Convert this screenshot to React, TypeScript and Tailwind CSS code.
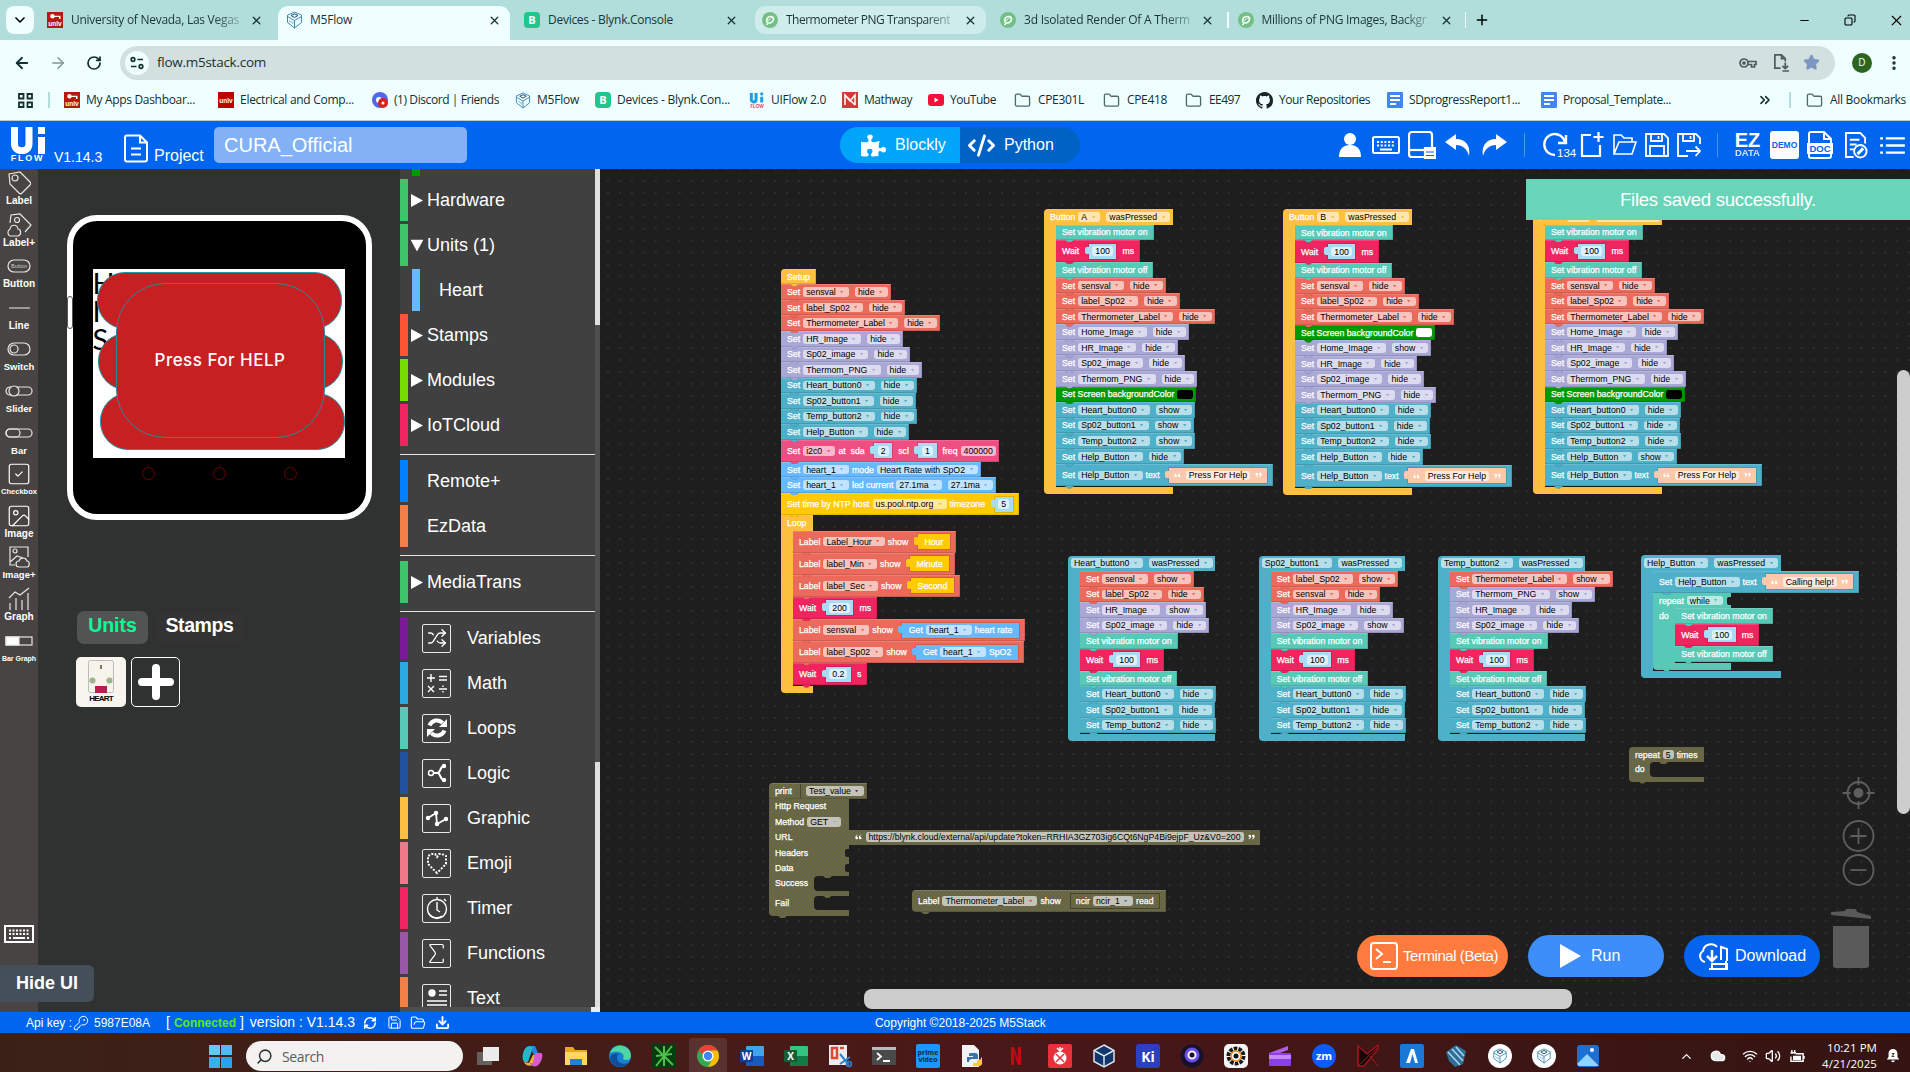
import React, { useLayoutEffect, useRef } from "react";
import {
  ArrowLeft, ArrowRight, RotateCw, ChevronDown, ChevronUp, X, Plus, Minus, Star, KeyRound, EllipsisVertical, Folder,
  ChevronsRight, CodeXml, FolderOpen, Save, Tag, Download, Search, Wifi, Volume2,
  Shuffle, RefreshCw, Sigma, Image as ImageIcon, Cloud, Copy, SquareCheck,
} from "lucide-react";
import { FaPuzzlePiece } from "react-icons/fa";

/* Text run whose tracking is adjusted so that it fills a given width. */
function Fit({ w, children, className = "" }: { w: number; children: string; className?: string }) {
  const ref = useRef<HTMLSpanElement>(null);
  useLayoutEffect(() => {
    const el = ref.current;
    if (!el) return;
    el.style.letterSpacing = "0px";
    const natural = el.getBoundingClientRect().width;
    el.style.letterSpacing = `${(w - natural) / children.length}px`;
  }, [w, children]);
  return (
    <span ref={ref} className={`inline-block shrink-0 whitespace-pre ${className}`}>
      {children}
    </span>
  );
}

/* ---------- favicons ---------- */
const Unlv = ({ keyed = true }: { keyed?: boolean }) => (
  <svg viewBox="0 0 16 16" className="h-4 w-4 shrink-0">
    <rect width="16" height="16" fill={keyed ? "#b41a10" : "#c00000"} />
    {keyed && <path d="M5.5 2a2.3 2.3 0 1 0 0 4.6A2.3 2.3 0 0 0 7.7 5H12v2h1.500V3.700H7.700A2.300 2.300 0 0 0 5.500 2z" fill="#fff" />}
    <text x="8" y={keyed ? 14 : 11} fontSize="6.500" fontWeight="700" textAnchor="middle" fill="#fff" fontFamily="Liberation Sans">unlv</text>
  </svg>
);
const M5 = ({ className = "h-[18px] w-[17px]" }: { className?: string }) => (
  <svg viewBox="0 0 17 18" className={`shrink-0 ${className}`} fill="none" stroke="#3e88b8" strokeWidth="1">
    <path d="M8.500 1 15.500 4.200v7.300L8.500 17 1.500 11.500V4.200z M1.500 5.500l7 4 7-4M8.500 9.500V17" />
    <path d="M5 4.500l3.500-1.700L12 4.500 8.500 6.500z" stroke="#1d4460" />
    <path d="M3 9.500l4 3v-2" stroke="#8dbcd8" />
  </svg>
);
const Blynk = () => (
  <div className="flex h-4 w-4 shrink-0 items-center justify-center rounded bg-[#23c48e] text-[11px] font-bold text-white">B</div>
);
const Png = () => (
  <svg viewBox="0 0 16 16" className="h-4 w-4 shrink-0">
    <circle cx="8" cy="8" r="8" fill="#74bf86" />
    <path d="M5 10.500c-1-4 1-6 3.500-6 2 0 3 1 3 2.500 0 2.500-2.500 4-5.500 4l-1.500 2" fill="none" stroke="#f2fff5" strokeWidth="1.700" />
    <path d="M6.500 9c.5-1.500 1.500-2.500 3-3" stroke="#f2fff5" fill="none" />
  </svg>
);
const Doc = () => (
  <svg viewBox="0 0 16 16" className="h-4 w-4 shrink-0">
    <rect width="16" height="16" rx="1" fill="#4484f1" />
    <path d="M3 4h10M3 8h10M3 12h6" stroke="#fff" strokeWidth="1.800" />
  </svg>
);

/* ---------- browser chrome ---------- */
function Tab({ icon, label, w, width, state = "", gap = 8, fade = "" }: { icon: React.ReactNode; label: string; w: number; width: string; state?: string; gap?: number; fade?: string }) {
  return (
    <div className={`flex shrink-0 items-center ${width} ${state}`}>
      {icon}
      <div className="shrink-0" style={{ width: gap }} />
      <Fit w={w} className={`text-[12px] text-[#1c3434] ${fade}`}>{label}</Fit>
      <X className="mr-[9px] ml-auto h-[13px] w-[13px] shrink-0 text-[#173231]" strokeWidth={2.4} />
    </div>
  );
}

const FADE = "[mask-image:linear-gradient(to_right,black_85%,rgba(0,0,0,0.3))]";

function TabStrip() {
  return (
    <div className="flex h-10 bg-[#b1dedb]">
      <div className="mt-1.5 ml-1.5 flex h-7 w-7 items-center justify-center rounded-lg bg-[#efffff]">
        <ChevronDown className="h-4 w-4" strokeWidth={2.5} />
      </div>
      <div className="flex h-10">
        <Tab icon={<Unlv />} label="University of Nevada, Las Vegas" w={168} fade={FADE} width="h-10 w-[233px] ml-[11px] pl-[2px] pr-[6px]" />
        <Tab icon={<M5 />} label="M5Flow" w={42} gap={7} width="w-[232px] pl-2" state="mt-1.5 h-[34px] rounded-t-[10px] bg-[#efffff] pb-[6px]" />
        <Tab icon={<Blynk />} label="Devices - Blynk.Console" w={125} width="h-10 w-[245px] pl-[14px] pr-[8px]" />
        <Tab icon={<Png />} label="Thermometer PNG Transparent" w={164} fade={FADE} width="w-[231px] pl-[7px]" state="mt-1.5 h-7 rounded-[10px] bg-[#cdecea]" />
        <Tab icon={<Png />} label="3d Isolated Render Of A Therm" w={166} fade={FADE} width="h-10 w-[241px] pl-[14px] pr-[4px]" />
        <div className="mt-3 h-4 w-[1.500px] bg-[#efffff]" />
        <Tab icon={<Png />} label="Millions of PNG Images, Backgr" w={165} fade={FADE} width="h-10 w-[236px] pl-[9px] pr-[3px]" />
        <div className="mt-3 h-4 w-[1.500px] bg-[#efffff]" />
      </div>
      <Plus className="mt-[12px] ml-[8px] h-4 w-4" strokeWidth={2.2} />
      <div className="ml-auto flex items-center pr-[5px]">
        <Minus className="h-[13px] w-[13px]" strokeWidth={1.800} />
        <Copy className="ml-[33px] h-[12px] w-[12px] -scale-x-100" strokeWidth={2.200} />
        <X className="ml-[32px] h-[17px] w-[17px]" strokeWidth={1.600} />
      </div>
    </div>
  );
}

function AddressBar() {
  return (
    <div className="flex h-[45px] items-center bg-[#efffff] pr-[7px] pl-[13px] text-[#12302f]">
      <ArrowLeft className="h-[18px] w-[18px]" strokeWidth={2.400} />
      <ArrowRight className="ml-[18px] h-[18px] w-[18px] opacity-50" />
      <RotateCw className="ml-[19px] h-4 w-4" strokeWidth={2.600} />
      <div className="ml-[18px] flex h-[34px] w-[1715px] items-center rounded-full bg-[#d3e0e0] px-[5px]">
        <div className="flex h-6 w-6 items-center justify-center rounded-full bg-[#efffff]">
          <svg viewBox="0 0 16 16" className="h-4 w-4" fill="none" stroke="#12302f" strokeWidth="1.700">
            <circle cx="4" cy="4.500" r="1.800" /><path d="M8.500 4.500H14M2 11.500h5.500" /><circle cx="12" cy="11.500" r="1.800" />
          </svg>
        </div>
        <Fit w={109} className="ml-2 text-[13.500px] text-[#1e2f2f]">flow.m5stack.com</Fit>
        <svg viewBox="0 0 18 12" className="ml-auto h-[12px] w-[18px]" fill="none" stroke="#4c5c5c" strokeWidth="1.700">
          <circle cx="5" cy="6" r="4" /><circle cx="5" cy="6" r="1" fill="#4c5c5c" /><path d="M9 4.500h8v3h-1.500V10h-3V7.500H9" />
        </svg>
        <svg viewBox="0 0 18 20" className="ml-4 h-[19px] w-[17px]" fill="none" stroke="#4c5c5c" strokeWidth="1.800">
          <path d="M8 16H2V2h7l4 4v3M9 2v4h4M13 10v6M10 13.500l3 3 3-3M10 19h7" />
        </svg>
        <Star className="mr-[10px] ml-[13px] h-[17px] w-[17px] fill-[#7d97c3] text-[#7d97c3]" />
      </div>
      <div className="ml-[17px] flex h-5 w-5 items-center justify-center rounded-full bg-[#2b651f] text-[10px] text-white">D</div>
      <EllipsisVertical className="ml-auto h-[18px] w-[18px]" strokeWidth={2.600} />
    </div>
  );
}

function Mark({ icon, text, w, ml, iw = 22 }: { icon: React.ReactNode; text: string; w: number; ml: number; iw?: number }) {
  return (
    <div className="flex shrink-0 items-center" style={{ marginLeft: ml }}>
      <div className="flex items-center" style={{ width: iw }}>{icon}</div>
      <Fit w={w}>{text}</Fit>
    </div>
  );
}

function Bookmarks() {
  const folder = <Folder className="h-[17px] w-[17px] text-[#4f6a69]" strokeWidth={1.900} />;
  return (
    <div className="flex h-[36px] items-center border-b border-[#b9cccb] bg-[#efffff] pb-[5px] text-[12px] text-[#132f2e]">
      <svg viewBox="0 0 15 15" className="ml-[18px] h-[15px] w-[15px]" fill="none" stroke="#12302f" strokeWidth="1.800">
        <path d="M1 1h4.500v4.500H1zM9.500 1H14v4.500H9.500zM1 9.500h4.500V14H1zM9.500 9.500H14V14H9.500z" />
      </svg>
      <div className="ml-[15px] h-4 w-[2px] bg-[#b1dedb]" />
      <Mark ml={14} icon={<Unlv />} text="My Apps Dashboar..." w={109} />
      <Mark ml={23} icon={<Unlv keyed={false} />} text="Electrical and Comp..." w={114} />
      <Mark ml={18} icon={<svg viewBox="0 0 16 16" className="h-4 w-4"><circle cx="8" cy="8" r="8" fill="#5566e8" /><circle cx="7" cy="8" r="3" fill="#fff" /><circle cx="11" cy="11" r="5" fill="#d8231f" /><circle cx="11" cy="11" r="1.500" fill="#fff" /></svg>} text="(1) Discord | Friends" w={105} />
      <Mark ml={16} icon={<M5 className="h-[17px] w-4" />} text="M5Flow" w={42} />
      <Mark ml={16} icon={<Blynk />} text="Devices - Blynk.Con..." w={113} />
      <Mark ml={19} icon={<svg viewBox="0 0 16 18" className="h-[17px] w-4"><path d="M2 1v7a2.500 2.500 0 0 0 5 0V1M13 5v6" stroke="#1c9fe0" strokeWidth="3.200" fill="none" /><circle cx="13" cy="2" r="1.700" fill="#1c9fe0" /><text x="8" y="17" fontSize="5" fontWeight="700" fill="#e04a6a" textAnchor="middle">FLOW</text></svg>} text="UIFlow 2.0" w={55} />
      <Mark ml={16} icon={<svg viewBox="0 0 16 16" className="h-4 w-4"><rect width="16" height="16" fill="#cf3b36" /><path d="M3 13V3l5 6 5-6v10M3 3l10 10" stroke="#fff" strokeWidth="1.500" fill="none" /></svg>} text="Mathway" w={48} />
      <Mark ml={16} icon={<svg viewBox="0 0 16 16" className="h-4 w-4"><rect y="2" width="16" height="12" rx="3" fill="#f5103a" /><path d="M6.500 5.500v5l4-2.500z" fill="#fff" /></svg>} text="YouTube" w={46} />
      <Mark ml={18} iw={24} icon={folder} text="CPE301L" w={46} />
      <Mark ml={19} iw={24} icon={folder} text="CPE418" w={40} />
      <Mark ml={18} iw={24} icon={folder} text="EE497" w={31} />
      <Mark ml={16} iw={23} icon={<svg viewBox="0 0 16 16" className="h-[17px] w-[17px]"><path fill="#1b2327" d="M8 0C3.580 0 0 3.580 0 8c0 3.540 2.290 6.530 5.470 7.590.4.070.55-.17.55-.38 0-.19-.01-.82-.01-1.490-2.010.37-2.530-.49-2.690-.94-.09-.23-.48-.94-.82-1.130-.28-.15-.68-.52-.01-.53.63-.01 1.080.58 1.230.82.72 1.210 1.870.87 2.330.66.070-.52.28-.87.51-1.070-1.780-.2-3.640-.89-3.640-3.950 0-.87.31-1.590.82-2.150-.08-.2-.36-1.020.08-2.120 0 0 .67-.21 2.200.82.64-.18 1.320-.27 2-.27s1.360.09 2 .27c1.530-1.040 2.200-.82 2.200-.82.44 1.100.16 1.920.08 2.120.51.56.82 1.270.82 2.150 0 3.070-1.870 3.750-3.650 3.950.29.25.54.73.54 1.480 0 1.070-.01 1.930-.01 2.200 0 .21.15.46.55.38A8.010 8.010 0 0 0 16 8c0-4.420-3.580-8-8-8" /></svg>} text="Your Repositories" w={91} />
      <Mark ml={17} icon={<Doc />} text="SDprogressReport1..." w={111} />
      <Mark ml={21} icon={<Doc />} text="Proposal_Template..." w={108} />
      <ChevronsRight className="mr-[16px] ml-auto h-4 w-4" strokeWidth={2.400} />
      <div className="h-4 w-[2px] bg-[#b1dedb]" />
      <div className="mr-[4px]"><Mark ml={15} iw={24} icon={folder} text="All Bookmarks" w={76} /></div>
    </div>
  );
}

/* ---------- UIFlow header ---------- */
const Sheet = ({ children, className }: { children?: React.ReactNode; className: string }) => (
  <svg viewBox="0 0 24 28" className={`shrink-0 ${className}`} fill="none" stroke="#fff" strokeWidth="2">
    <path d="M16 1H3a2 2 0 0 0-2 2v22a2 2 0 0 0 2 2h18a2 2 0 0 0 2-2V8zM16 1v7h7" />
    {children}
  </svg>
);

function Header() {
  return (
    <div className="flex h-12 items-center bg-[#0066ef] text-white">
      <div className="ml-[10px] flex w-[35px] flex-col items-center">
        <svg viewBox="0 0 34 27" className="h-[27px] w-[34px]" fill="none" stroke="#fff" strokeWidth="7">
          <path d="M3.500 0v17c0 9 14.500 9 14.500 0V0M30.500 10v17" /><path d="M27 3.500h7" />
        </svg>
        <span className="text-[9px] leading-[9px] font-bold tracking-[1.700px]">FLOW</span>
      </div>
      <span className="ml-[9px] w-[49px] pt-6 text-[14px] leading-none">V1.14.3</span>
      <Sheet className="ml-[21px] mt-[6px] h-[29px] w-[24px]"><path d="M7 14h10M7 20h10" /></Sheet>
      <span className="ml-[6px] w-[51px] pt-[22px] text-[16px] leading-[18px]">Project</span>
      <div className="ml-[9px] flex h-9 w-[253px] items-center rounded-[5px] bg-[#82b1f6] pl-[10px] text-[20px]">CURA_Official</div>
      <div className="ml-[373px] flex h-9 overflow-hidden rounded-full text-[16px]">
        <div className="flex w-[120px] items-center bg-[#00a4f8] pl-[21px]">
          <FaPuzzlePiece className="mr-[9px] h-[25px] w-[25px]" />Blockly
        </div>
        <div className="flex w-[120px] items-center bg-[#0062c4] pl-[7px]">
          <CodeXml className="mr-[8px] h-[29px] w-[29px]" strokeWidth={2.400} />Python
        </div>
      </div>
      <svg viewBox="0 0 22 24" className="ml-[259px] h-6 w-[22px]" fill="#fff"><circle cx="11" cy="6" r="6" /><path d="M0 24c0-8 4-12 11-12s11 4 11 12z" /></svg>
      <svg viewBox="0 0 28 18" className="ml-[11px] h-[18px] w-[28px]" fill="none" stroke="#fff" strokeWidth="2">
        <rect x="1" y="1" width="26" height="16" rx="1.500" /><path d="M5 6h18M5 9.500h18" strokeDasharray="2 1.700" /><path d="M8 13.500h12" />
      </svg>
      <svg viewBox="0 0 28 28" className="ml-2 h-7 w-[28px]" fill="none" stroke="#fff" strokeWidth="2.200">
        <path d="M16 26H4a3 3 0 0 1-3-3V4a3 3 0 0 1 3-3h17a3 3 0 0 1 3 3v12" /><path d="M1 19h16" /><path d="M17 17h10v11H17z" fill="#fff" /><path d="M18 21h8M18 24.500h8" stroke="#0066ef" strokeWidth="1" />
      </svg>
      <svg viewBox="0 0 26 24" className="ml-[9px] h-6 w-[26px]" fill="#fff"><path d="M11 1 0 9l11 8v-5c7 0 11 4 13 11C26 12 20 6 11 6z" /></svg>
      <svg viewBox="0 0 26 24" className="ml-[10px] h-6 w-[26px] -scale-x-100" fill="#fff"><path d="M11 1 0 9l11 8v-5c7 0 11 4 13 11C26 12 20 6 11 6z" /></svg>
      <div className="ml-[17px] h-6 w-px bg-[#4d94f5]" />
      <svg viewBox="0 0 34 28" className="ml-[18px] h-7 w-[34px]" fill="none" stroke="#fff" strokeWidth="2.400">
        <path d="M12 24A10.500 10.500 0 1 1 22 11" /><path d="M15 12h8V4" />
        <text x="14" y="26" fill="#fff" stroke="none" fontSize="11.500">134</text>
      </svg>
      <svg viewBox="0 0 24 26" className="ml-[3px] h-[26px] w-6" fill="none" stroke="#fff" strokeWidth="2.200"><path d="M11 3H2v21h18V13M18.500 0v10M13.500 5h10" /></svg>
      <svg viewBox="0 0 24 22" className="ml-[9px] h-[22px] w-6" fill="none" stroke="#fff" strokeWidth="1.600"><path d="M1 20V1h7l3 3h8v4M1 20 6 8h17l-4 12z" /></svg>
      <svg viewBox="0 0 24 24" className="ml-[8px] h-6 w-6" fill="none" stroke="#fff" strokeWidth="1.800"><path d="M1 1h18l4 4v18H1zM6 1v7h11V1M5 23V13h14v10M13.500 3v3" /></svg>
      <svg viewBox="0 0 24 24" className="ml-[8px] h-6 w-6" fill="none" stroke="#fff" strokeWidth="1.800"><path d="M11 23H1V1h18l4 4v6M6 1v7h11V1M13.500 3v3M9 18h14M18.500 13.500 23 18l-4.500 5" /></svg>
      <div className="ml-[16px] h-6 w-px bg-[#4d94f5]" />
      <div className="ml-[16px] w-[27px] text-center">
        <div className="text-[20px] leading-[16px] font-bold">EZ</div>
        <div className="text-[9.500px] leading-[10px] font-bold opacity-80">DATA</div>
      </div>
      <div className="ml-[9px] flex h-7 w-[29px] items-center justify-center rounded-[3px] bg-white text-[8.500px] font-bold text-[#0066ef]">DEMO</div>
      <Sheet className="ml-[7px] h-7 w-[28px]"><rect x="-1" y="12" width="26" height="11" fill="#fff" stroke="none" /><text x="12" y="21" fontSize="9.500" fontWeight="700" fill="#0066ef" stroke="none" textAnchor="middle">DOC</text></Sheet>
      <svg viewBox="0 0 24 28" className="ml-[11px] h-[27px] w-[23px]" fill="none" stroke="#fff" strokeWidth="2"><path d="M9 26H1V1h15l5 5v6M5 8h10M5 13h7M5 18h4" /><circle cx="16" cy="20" r="6.500" /><path d="m13 23 6-6" strokeWidth="3" /></svg>
      <svg viewBox="0 0 26 20" className="ml-[12px] h-[19px] w-[25px]" fill="none" stroke="#fff" strokeWidth="2.600"><path d="M0 2.500h3M6 2.500h20M0 10h3M6 10h20M0 17.500h3M6 17.500h20" /></svg>
    </div>
  );
}

/* ---------- widget rail ---------- */
function Rail() {
  const s = { fill: "none", stroke: "#e6e6e6", strokeWidth: 1.2 } as const;
  const items: [string, React.ReactNode, string][] = [
    ["Label", <svg viewBox="0 0 24 24" className="h-6 w-6" {...s}><path d="M2 3 13 1l10 10c1 1 1 2 0 3l-8 8c-1 1-2 1-3 0L3 13z" /><circle cx="8" cy="7" r="3" /></svg>, "text-[10px]"],
    ["Label+", <svg viewBox="0 0 26 24" className="h-6 w-[26px]" {...s}><path d="M4 10 5 2l9-1 11 11-6 7" /><circle cx="11" cy="7" r="2.500" /><path d="M4 23a4 4 0 0 1 0-7c1-5 7-5 8 0 3 0 4 6 0 7z" /></svg>, "text-[10px]"],
    ["Button", <svg viewBox="0 0 24 14" className="h-[14px] w-6" {...s}><rect x="1" y="1" width="22" height="12" rx="6" /><text x="12" y="9" fontSize="5.500" fill="#ccc" stroke="none" textAnchor="middle">Button</text></svg>, "text-[10px]"],
    ["Line", <div className="h-[1.500px] w-[21px] bg-[#999]" />, "text-[10px]"],
    ["Switch", <svg viewBox="0 0 24 14" className="h-[14px] w-6" {...s}><rect x="1" y="1" width="22" height="12" rx="6" /><circle cx="7" cy="7" r="4" /></svg>, "text-[9.500px]"],
    ["Slider", <svg viewBox="0 0 28 14" className="h-[14px] w-7" {...s}><rect x="1" y="3" width="26" height="8" rx="4" /><circle cx="9" cy="7" r="5" fill="#484443" /></svg>, "text-[9.500px]"],
    ["Bar", <svg viewBox="0 0 28 14" className="h-[14px] w-7" {...s}><rect x="1" y="3" width="26" height="8" rx="4" /><rect x="1" y="3" width="14" height="8" rx="4" /></svg>, "text-[9.500px]"],
    ["Checkbox", <SquareCheck className="h-[26px] w-[26px]" strokeWidth={1.1} />, "text-[7.500px]"],
    ["Image", <ImageIcon className="h-[26px] w-[26px]" strokeWidth={1.1} />, "text-[10px]"],
    ["Image+", <svg viewBox="0 0 24 24" className="h-6 w-6" {...s}><path d="M8 20H3V2h18v10M3 17l7-6 6 2" /><circle cx="8" cy="6" r="2" /><path d="M12 22a3 3 0 0 1 0-6c1-4 7-4 8 0 3 0 3 6 0 6z" /></svg>, "text-[9.500px]"],
    ["Graph", <svg viewBox="0 0 24 24" className="h-6 w-6" {...s}><path d="m2 11 6-6 5 3 9-7M3 23v-7M9 23V11M15 23V13M21 23V6" /></svg>, "text-[10px]"],
    ["Bar Graph", <svg viewBox="0 0 28 10" className="h-[10px] w-7" {...s}><rect x="1" y="1" width="26" height="8" /><rect x="1" y="1" width="13" height="8" fill="#fff" /></svg>, "text-[7px]"],
  ];
  return (
    <div className="flex w-[38px] shrink-0 flex-col bg-[#484443] text-white">
      {items.map(([label, icon, size]) => (
        <div key={label} className="flex h-[41.600px] flex-col items-center">
          <div className="flex h-[26px] items-center pt-[2px]">{icon}</div>
          <span className={`leading-[11px] font-bold whitespace-nowrap ${size}`}>{label}</span>
        </div>
      ))}
      <svg viewBox="0 0 30 18" className="mt-[257px] ml-1 h-[18px] w-[30px]" fill="none" stroke="#fff" strokeWidth="2">
        <rect x="1" y="1" width="28" height="16" /><path d="M5 5.500h20M5 9h20" strokeDasharray="2 1.500" /><path d="M5 13h2M9 13h12M23 13h2" />
      </svg>
    </div>
  );
}

/* ---------- device preview ---------- */
function Preview() {
  const pill = "absolute h-[57px] w-[245px] rounded-[28px] border border-[#1f94a3] bg-[#c62022]";
  return (
    <div className="relative flex w-[362px] shrink-0 flex-col bg-[#303231]">
      <div className="relative mt-[46px] ml-[28.500px] flex h-[305px] w-[305px] flex-col rounded-[30px] border-[6.500px] border-white bg-black">
        <div className="absolute top-[75px] -left-[6px] h-[33px] w-[6px] rounded-[3px] border border-[#555] bg-white" />
        <div className="relative mt-[48px] ml-[20px] h-[189px] w-[252px] overflow-hidden bg-white">
          <div className="absolute top-0 left-0 text-[29px] leading-[28px] text-black" style={{ fontFamily: "Lato, sans-serif" }}>
            <div>H</div><div>I</div><div>S</div>
          </div>
          <div className={`${pill} top-[3px] left-[4px]`} />
          <div className={`${pill} top-[64px] left-[5px]`} />
          <div className={`${pill} top-[124px] left-[7px]`} />
          <div className="absolute top-[14px] left-[23px] flex h-[155px] w-[209px] items-center justify-center rounded-[49px] border border-[#2c8894] bg-[#c62022] font-medium text-white" style={{ fontFamily: "Inter, 'Noto Sans', sans-serif" }}>
            <Fit w={131} className="text-[17px]">Press For HELP</Fit>
          </div>
        </div>
        <div className="mt-[9px] flex justify-center gap-[58px]">
          <div className="h-[13px] w-[13px] rounded-full border border-[#710000]" />
          <div className="h-[13px] w-[13px] rounded-full border border-[#710000]" />
          <div className="h-[13px] w-[13px] rounded-full border border-[#710000]" />
        </div>
      </div>
      <div className="mt-[91px] ml-[39px] flex text-[19.500px] font-bold">
        <div className="flex h-[33px] w-[71px] items-center justify-center rounded-[7px] bg-[#525453] pb-1 text-[#0dfb95]">Units</div>
        <div className="ml-[8px] flex h-[33px] w-[87px] items-center justify-center rounded-[7px] bg-[#333333] pb-1 text-white"><Fit w={68}>Stamps</Fit></div>
      </div>
      <div className="mt-[13px] ml-[38px] flex gap-[5px]">
        <div className="flex h-[50px] w-[50px] flex-col items-center rounded-[5px] bg-[#f8f4ee] pt-[3px]">
          <svg viewBox="0 0 26 34" className="h-[34px] w-[26px]"><rect x=".5" y=".5" width="25" height="32" rx="2" fill="#f6f3ea" stroke="#bbb" /><path d="M13 5v4" stroke="#643" strokeWidth="1.500" /><circle cx="4.500" cy="20.500" r="3" fill="#9fb28c" /><circle cx="21.500" cy="20.500" r="3" fill="#9fb28c" /><path d="M7 26h12v7H7z" fill="#b81f4f" /></svg>
          <span className="text-[8px] leading-[9px] font-bold tracking-[-0.800px] text-black">HEART</span>
        </div>
        <div className="flex h-[50px] w-[49px] items-center justify-center rounded-[5px] border-[1.500px] border-white">
          <svg viewBox="0 0 36 36" className="h-9 w-9"><path d="M18 4v28M4 18h28" stroke="#fff" strokeWidth="8" strokeLinecap="round" /></svg>
        </div>
      </div>
    </div>
  );
}

/* ---------- toolbox ---------- */
const glyph = { fill: "none", stroke: "#fff", strokeWidth: 1.4 } as const;
const toolIcons: Record<string, React.ReactNode> = {
  Variables: <Shuffle className="h-[20px] w-[20px]" strokeWidth={1.6} />,
  Math: <svg viewBox="0 0 24 24" className="h-6 w-6" {...glyph}><path d="M2 7h8M6 3v8M14 5.500h8M14 9h8M3 15l6 6M9 15l-6 6M14 18h8M18 14.500v1.500M18 20v1.500" /></svg>,
  Loops: <svg viewBox="0 0 24 24" className="h-6 w-6" fill="none" stroke="#fff" strokeWidth="4"><path d="M4.500 9.500C7 3.500 14 3 17.500 7M19.500 14.500C17 20.500 10 21 6.500 17" /><path d="M22 3v8h-8zM2 21v-8h8z" fill="#fff" stroke="none" /></svg>,
  Logic: <svg viewBox="0 0 24 24" className="h-6 w-6" {...glyph}><circle cx="6" cy="12" r="2.500" /><path d="M8.500 12h4c3 0 3-7 6-7M12.500 12c3 0 3 7 6 7" strokeWidth="2" /><circle cx="19" cy="5" r="1.500" fill="#fff" /><circle cx="19" cy="19" r="1.500" fill="#fff" /></svg>,
  Graphic: <svg viewBox="0 0 24 24" className="h-6 w-6" {...glyph} strokeWidth={1.800}><path d="m3 12 8-5 1 11 9-5" /><circle cx="3" cy="12" r="1.300" fill="#fff" /><circle cx="11" cy="7" r="1.300" fill="#fff" /><circle cx="12" cy="18" r="1.300" fill="#fff" /><circle cx="21" cy="13" r="1.300" fill="#fff" /></svg>,
  Emoji: <svg viewBox="0 0 24 24" className="h-6 w-6" {...glyph} strokeWidth={2} strokeDasharray="2 1.500"><path d="M12 22 3 13V5l4-2h3l2 3 2-3h3l4 2v8z" /></svg>,
  Timer: <svg viewBox="0 0 24 24" className="h-6 w-6" {...glyph}><circle cx="12" cy="13" r="9.500" /><path d="M12 1v3M12 6v8l3 2M19 3l2 2M4 18c3 4 9 5 13 2" /></svg>,
  Functions: <Sigma className="h-[27px] w-[27px]" strokeWidth={1.100} />,
  Text: <svg viewBox="0 0 24 24" className="h-6 w-6" {...glyph}><circle cx="7" cy="7" r="3" fill="#fff" /><path d="M14 5h8M14 9h8M2 15h20M2 19h20" /></svg>,
};

function Cat({ name, bar, arrow, icon, h = "h-[42px]" }: { name: string; bar: string; arrow?: "r" | "d"; icon?: boolean; h?: string }) {
  return (
    <div className={`mb-[3px] flex shrink-0 items-center ${h}`}>
      <div className={`w-2 self-stretch ${bar}`} />
      {icon ? (
        <>
          <div className="ml-[14px] flex h-[29px] w-[29px] items-center justify-center rounded-[2px] border-[1.500px] border-[#e8e8e8]">{toolIcons[name]}</div>
          <span className="ml-[16px]">{name}</span>
        </>
      ) : (
        <>
          <div className="flex w-[19px] pl-[3px]">
            {arrow && <svg viewBox="0 0 12 13" className={`h-[13px] w-[12px] ${arrow === "d" ? "rotate-90" : ""}`}><path d="M0 0v13l12-6.500z" fill="#fff" /></svg>}
          </div>
          <span>{name}</span>
        </>
      )}
    </div>
  );
}

function Toolbox() {
  const line = <div className="mt-[5px] mb-[5px] h-px shrink-0 bg-[#e4e4e4]" />;
  return (
    <div className="flex w-[200px] shrink-0 flex-col bg-[#4e4e4e]">
      <div className="flex min-h-0 flex-1">
        <div className="flex w-[195px] flex-col overflow-hidden bg-[#404040] text-[18px] text-white">
          <div className="mb-[3px] ml-3 h-[7px] w-2 shrink-0 bg-[#009a00]" />
          <Cat name="Hardware" bar="bg-[#3ec569]" arrow="r" />
          <Cat name="Units (1)" bar="bg-[#3ec569]" arrow="d" />
          <div className="mb-[3px] ml-3 flex h-[42px] shrink-0 items-center"><div className="mr-[19px] h-[42px] w-2 bg-[#66b8ff]" />Heart</div>
          <Cat name="Stamps" bar="bg-[#ff5533]" arrow="r" />
          <Cat name="Modules" bar="bg-[#77dd00]" arrow="r" />
          <Cat name="IoTCloud" bar="bg-[#f0245f]" arrow="r" />
          {line}
          <Cat name="Remote+" bar="bg-[#0080ff]" />
          <Cat name="EzData" bar="bg-[#f08045]" />
          {line}
          <Cat name="MediaTrans" bar="bg-[#3ec569]" arrow="r" />
          {line}
          <Cat icon name="Variables" bar="bg-[#7a1a98]" />
          <Cat icon name="Math" bar="bg-[#2ba8e0]" />
          <Cat icon name="Loops" bar="bg-[#57c9b6]" />
          <Cat icon name="Logic" bar="bg-[#20529e]" />
          <Cat icon name="Graphic" bar="bg-[#ffbf40]" />
          <Cat icon name="Emoji" bar="bg-[#f07888]" />
          <Cat icon name="Timer" bar="bg-[#f0245f]" />
          <Cat icon name="Functions" bar="bg-[#9858a8]" />
          <Cat icon name="Text" bar="bg-[#f08045]" />
        </div>
        <div className="flex w-[5px] flex-col justify-between">
          <div className="h-[156px] bg-[#e0dede]" />
          <div className="h-[245px] bg-[#e0dede]" />
        </div>
      </div>
      <div className="flex h-[5px] justify-end bg-[#4e4e4e]"><div className="w-[9px] bg-[#ececec]" /></div>
    </div>
  );
}

/* ---------- blocks ---------- */
type Tone = "red" | "vio" | "aqua" | "mint" | "pink" | "green" | "amber" | "gold" | "sky" | "rose" | "ice" | "peach" | "off";
const OFF = "bg-[#68683f] bg-[repeating-conic-gradient(#636350_0_25%,#6d6b3d_0_50%)] bg-[size:4px_4px]";
const bg: Record<Tone, string> = {
  red: "bg-[#ec6a5b]", vio: "bg-[#a9a7d5]", aqua: "bg-[#4eb0c9]", mint: "bg-[#57c9b6]", pink: "bg-[#f0245f]",
  green: "bg-[#009a00]", amber: "bg-[#fdc03f]", gold: "bg-[#ffcb00]", sky: "bg-[#66b8ff]", rose: "bg-[#ee4f83]",
  ice: "bg-[#a9dbf5]", peach: "bg-[#fac8aa]", off: OFF,
};
const fg: Record<Tone, string> = {
  red: "text-[#ec6a5b]", vio: "text-[#a9a7d5]", aqua: "text-[#4eb0c9]", mint: "text-[#57c9b6]", pink: "text-[#f0245f]",
  green: "text-[#009a00]", amber: "text-[#fdc03f]", gold: "text-[#ffcb00]", sky: "text-[#66b8ff]", rose: "text-[#ee4f83]",
  ice: "text-[#a9dbf5]", peach: "text-[#fac8aa]", off: "text-[#6b6a46]",
};
const EDGE = "shadow-[inset_0_0.600px_0_rgba(255,255,255,0.300),inset_0_-0.600px_0_rgba(0,0,0,0.250),inset_-0.600px_0_0_rgba(0,0,0,0.200)]";

const L = ({ children }: { children: React.ReactNode }) => <span className="whitespace-pre">{children}</span>;

function F({ c, children, arrow = true, after = false, tip = "" }: { c: Tone; children: React.ReactNode; arrow?: boolean; after?: boolean; tip?: string }) {
  return (
    <span className={`flex h-[9.600px] items-center rounded-[2.400px] px-[3px] whitespace-pre text-black [-webkit-text-stroke:0] ${c === "off" ? "bg-[#c4c3b8]" : "bg-white/60"} ${after ? "ml-[3px]" : ""}`}>
      {children}
      {arrow && (
        <svg viewBox="0 0 4 3" className={`mr-[2.500px] ml-[4.500px] h-[2.400px] w-[3.200px] ${tip || fg[c]}`}><path d="M0 0h4L2 3z" fill="currentColor" /></svg>
      )}
    </span>
  );
}

function V({ c, children }: { c: Tone; children: React.ReactNode }) {
  return (
    <span className={`relative mr-[3px] ml-[6.500px] flex h-[15px] items-center gap-[3px] px-[3.600px] ${bg[c]} shadow-[0_0_0_0.600px_rgba(0,0,0,0.200)]`}>
      <span className={`absolute top-[3px] -left-[4px] h-[7.500px] w-[4.500px] rounded-l-[2px] ${bg[c]}`} />
      {children}
    </span>
  );
}
const Num = ({ children }: { children: string }) => <V c="ice"><F c="ice" arrow={false}>{children}</F></V>;
const Mood = ({ close = false }: { close?: boolean }) => (
  <svg viewBox="0 0 8 6" className={`mx-[1.500px] h-[6px] w-[7px] ${close ? "rotate-180" : ""}`}>
    <path d="M3.300.3C1 .8.200 2.500.400 4.200a1.500 1.500 0 1 0 1.500-1.600C1.900 1.800 2.500 1 3.500.8zM7.300.3C5 .8 4.200 2.500 4.400 4.200a1.500 1.500 0 1 0 1.500-1.600C5.900 1.800 6.500 1 7.500.8z" fill="#fff" />
  </svg>
);
const Str = ({ children }: { children: string }) => (
  <V c="peach"><Mood /><F c="peach" arrow={false}>{children}</F><Mood close /></V>
);

function Notch({ c }: { c: Tone }) {
  return (
    <svg viewBox="0 0 9 2.400" className={`absolute -bottom-[2.300px] left-[9px] z-10 h-[2.400px] w-[9px] ${fg[c]}`}>
      <path d="M0 0h9L6 2.400H3z" fill="currentColor" />
      <path d="M0 0l3 2.400h3L9 0" fill="none" stroke="#000" strokeOpacity=".2" strokeWidth=".6" />
    </svg>
  );
}

function R({ c, tall = false, end = false, children, notch = true, extra = "" }: { c: Tone; tall?: boolean; end?: boolean; children: React.ReactNode; notch?: boolean; extra?: string }) {
  return (
    <div className={`relative flex w-max items-center gap-[3px] pl-[6px] ${end ? "pr-[6px]" : "pr-[3px]"} ${tall ? "h-[22.100px]" : "h-[15.550px]"} ${bg[c]} ${EDGE} ${extra}`}>
      {children}
      {notch && <Notch c={c} />}
    </div>
  );
}

const SetRow = ({ c, n, v }: { c: Tone; n: string; v: string }) => (
  <R c={c}><L>Set</L><F c={c}>{n}</F><F c={c} after>{v}</F></R>
);
const Vib = ({ on }: { on: boolean }) => <R c="mint" end><L>{on ? "Set vibration motor on" : "Set vibration motor off"}</L></R>;
const Wait = ({ v = "100", u = "ms" }: { v?: string; u?: string }) => <R c="pink" tall end><L>Wait</L><Num>{v}</Num><L>{u}</L></R>;
const HelpText = ({ v }: { v: string }) => (
  <R c="aqua" tall><L>Set</L><F c="aqua">Help_Button</F><L>text</L><Str>{v}</Str></R>
);
const Bg = ({ white = false }: { white?: boolean }) => (
  <R c="green"><L>Set Screen backgroundColor</L><span className={`h-[9.600px] w-[15.500px] rounded-[2.400px] ${white ? "bg-white" : "bg-black"}`} /></R>
);

/* C-shaped block: header, body indented by a wall, footer bar. */
function Wrap({ c, head, w, children, round = true }: { c: Tone; head: React.ReactNode; w: string; children: React.ReactNode; round?: boolean }) {
  return (
    <div className="flex flex-col">
      <div className={`flex h-[15.550px] items-center gap-[3px] ${w} ${bg[c]} ${round ? "rounded-tl-[4px]" : ""}`}>{head}</div>
      <div className="flex">
        <div className={`w-[12px] ${bg[c]}`} />
        <div className="flex flex-col border-b border-[#1c1c1c]">{children}</div>
      </div>
      <div className={`h-[7px] rounded-bl-[4px] ${w} ${bg[c]}`} />
    </div>
  );
}

const At = ({ x, y, children }: { x: number; y: number; children: React.ReactNode }) => (
  <div className="absolute" style={{ left: x - 600, top: y - 169 }}>{children}</div>
);

function ButtonBlock({ name, middle, help }: { name: string; middle: React.ReactNode; help: string }) {
  const b = name === "A" ? "show" : "hide";
  return (
    <Wrap c="amber" w="w-[129px] pl-[6px]" head={<><L>Button</L><F c="amber">{name}</F><F c="amber" after>wasPressed</F></>}>
      <Vib on /><Wait /><Vib on={false} />
      <SetRow c="red" n="sensval" v="hide" />
      <SetRow c="red" n="label_Sp02" v="hide" />
      <SetRow c="red" n="Thermometer_Label" v="hide" />
      {middle}
      <SetRow c="aqua" n="Heart_button0" v={b} />
      <SetRow c="aqua" n="Sp02_button1" v={b} />
      <SetRow c="aqua" n="Temp_button2" v={b} />
      <SetRow c="aqua" n="Help_Button" v={help} />
      <HelpText v="Press For Help" />
    </Wrap>
  );
}

function Images({ home }: { home: string }) {
  return (
    <>
      <SetRow c="vio" n="Home_Image" v={home} />
      <SetRow c="vio" n="HR_Image" v="hide" />
      <SetRow c="vio" n="Sp02_image" v="hide" />
      <SetRow c="vio" n="Thermom_PNG" v="hide" />
    </>
  );
}

function TouchBlock({ name, rows, w }: { name: string; rows: [Tone, string, string][]; w: string }) {
  return (
    <Wrap c="aqua" w={w} head={<><F c="aqua">{name}</F><F c="aqua" after>wasPressed</F></>}>
      {rows.map(([c, n, v]) => <SetRow key={n} c={c} n={n} v={v} />)}
      <Vib on /><Wait /><Vib on={false} />
      <SetRow c="aqua" n="Heart_button0" v="hide" />
      <SetRow c="aqua" n="Sp02_button1" v="hide" />
      <SetRow c="aqua" n="Temp_button2" v="hide" />
    </Wrap>
  );
}

const Hole = ({ left }: { left: string }) => (
  <div className={`relative h-[14.500px] rounded-l-[4px] bg-[#1e1e1e] ${left}`}>
    <span className="absolute top-0 left-[9px] h-[2.400px] w-[9px] bg-[#68683f] [clip-path:polygon(0_0,100%_0,66%_100%,33%_100%)]" />
  </div>
);
const Socket = () => <span className="ml-auto h-[8px] w-[4px] rounded-l-[2px] bg-[#1e1e1e]" />;

function Workspace() {
  return (
    <div className="relative min-w-0 flex-1 overflow-hidden bg-[#1e1e1e] bg-[radial-gradient(circle,#343434_0.600px,transparent_1px)] bg-[size:11.950px_11.950px] bg-[position:2px_6px] text-[8.750px] leading-[10px] text-white [-webkit-text-stroke:0.250px_white]">
      <At x={781} y={268.8}>
        <R c="amber" end notch extra="rounded-tl-[4px]"><L>Setup</L></R>
        <SetRow c="red" n="sensval" v="hide" />
        <SetRow c="red" n="label_Sp02" v="hide" />
        <SetRow c="red" n="Thermometer_Label" v="hide" />
        <SetRow c="vio" n="HR_Image" v="hide" />
        <SetRow c="vio" n="Sp02_image" v="hide" />
        <SetRow c="vio" n="Thermom_PNG" v="hide" />
        <SetRow c="aqua" n="Heart_button0" v="hide" />
        <SetRow c="aqua" n="Sp02_button1" v="hide" />
        <SetRow c="aqua" n="Temp_button2" v="hide" />
        <SetRow c="aqua" n="Help_Button" v="hide" />
        <R c="rose" tall><L>Set</L><F c="rose">i2c0</F><L>at  sda</L><Num>2</Num><L>scl</L><Num>1</Num><L>freq</L><F c="rose" arrow={false}>400000</F></R>
        <R c="sky"><L>Set</L><F c="sky">heart_1</F><L>mode</L><F c="sky">Heart Rate with SpO2</F></R>
        <R c="sky"><L>Set</L><F c="sky">heart_1</F><L>led current</L><F c="sky">27.1ma</F><F c="sky" after>27.1ma</F></R>
        <R c="gold" tall><L>Set time by NTP host</L><F c="gold">us.pool.ntp.org</F><L>timezone</L><Num>5</Num></R>
        <Wrap c="amber" w="w-[32px] pl-[6px]" round={false} head={<L>Loop</L>}>
          <R c="red" tall><L>Label</L><F c="red">Label_Hour</F><L>show</L><V c="gold"><span className="px-[3px]">Hour</span></V></R>
          <R c="red" tall><L>Label</L><F c="red">label_Min</F><L>show</L><V c="gold"><span className="px-[3px]">Minute</span></V></R>
          <R c="red" tall><L>Label</L><F c="red">label_Sec</F><L>show</L><V c="gold"><span className="px-[3px]">Second</span></V></R>
          <Wait v="200" />
          <R c="red" tall><L>Label</L><F c="red">sensval</F><L>show</L><V c="sky"><span className="pl-[3px]">Get</span><F c="sky">heart_1</F><span className="pr-[3px]">heart rate</span></V></R>
          <R c="red" tall><L>Label</L><F c="red">label_Sp02</F><L>show</L><V c="sky"><span className="pl-[3px]">Get</span><F c="sky">heart_1</F><span className="pr-[3px]">SpO2</span></V></R>
          <Wait v="0.2" u="s" />
        </Wrap>
      </At>

      <At x={1044} y={209}><ButtonBlock name="A" help="hide" middle={<><Images home="hide" /><Bg /></>} /></At>
      <At x={1283} y={209.4}><ButtonBlock name="B" help="hide" middle={<><Bg white /><Images home="show" /></>} /></At>
      <At x={1533} y={209}><ButtonBlock name="C" help="show" middle={<><Images home="hide" /><Bg /></>} /></At>

      <At x={1068} y={555.5}><TouchBlock name="Heart_button0" w="w-[147px] pl-[3px]" rows={[["red", "sensval", "show"], ["red", "label_Sp02", "hide"], ["vio", "HR_Image", "show"], ["vio", "Sp02_image", "hide"]]} /></At>
      <At x={1258.7} y={555.5}><TouchBlock name="Sp02_button1" w="w-[146px] pl-[3px]" rows={[["red", "label_Sp02", "show"], ["red", "sensval", "hide"], ["vio", "HR_Image", "hide"], ["vio", "Sp02_image", "show"]]} /></At>
      <At x={1438} y={555.5}><TouchBlock name="Temp_button2" w="w-[147px] pl-[3px]" rows={[["red", "Thermometer_Label", "show"], ["vio", "Thermom_PNG", "show"], ["vio", "HR_Image", "hide"], ["vio", "Sp02_image", "hide"]]} /></At>
      <At x={1641} y={555.2}>
        <Wrap c="aqua" w="w-[140px] pl-[3px]" head={<><F c="aqua">Help_Button</F><F c="aqua" after>wasPressed</F></>}>
          <HelpText v="Calling help!" />
          <div className="flex flex-col">
            <div className="flex h-[15.550px] w-[78px] items-center gap-[3px] bg-[#57c9b6] pl-[6px]"><L>repeat</L><F c="mint">while</F><Socket /></div>
            <div className="flex">
              <div className="w-[22.300px] bg-[#57c9b6] pt-[3px] pl-[6px]">do</div>
              <div className="flex flex-col border-b border-[#1c1c1c]"><Vib on /><Wait /><Vib on={false} /></div>
            </div>
            <div className="relative h-[7px] w-[78px] rounded-bl-[4px] bg-[#57c9b6]"><Notch c="mint" /></div>
          </div>
        </Wrap>
      </At>

      <At x={1629} y={747}>
        <div className={`relative flex w-[75px] flex-col rounded-l-[4px] ${OFF}`}>
          <div className="flex h-[15px] items-center gap-[3px] pl-[6px]"><L>repeat</L><F c="off" arrow={false}>5</F><L>times</L></div>
          <div className="flex h-[14.500px] pl-[6px]"><span className="w-[15px] pt-[2px]">do</span><Hole left="flex-1" /></div>
          <div className="h-[5px]" /><Notch c="off" />
        </div>
      </At>

      <At x={769} y={783}>
        <R c="off" extra="rounded-tl-[4px]">
          <L>print</L><span className="mr-[2px] ml-[5px] h-[14px] w-px bg-[#45452f]" /><F c="off" tip="text-[#7a1a98]">Test_value</F>
        </R>
        <div className={`relative flex w-[80px] flex-col rounded-bl-[4px] ${OFF}`}>
          <div className="flex h-[15.500px] items-center pl-[6px]">Http Request</div>
          <div className="flex h-[15.500px] items-center gap-[3px] pl-[6px]">Method<F c="off" tip="text-[#8fb4c4]">GET</F></div>
          <div className="relative flex h-[15.500px] items-center pl-[6px]">
            URL
            <div className={`absolute top-0 left-[80px] flex h-[15px] w-[411px] items-center justify-between px-[4px] ${OFF}`}>
              <Mood /><span className="flex h-[10px] items-center rounded-[2.400px] bg-[#c4c3b8] px-[3px] text-black [-webkit-text-stroke:0]"><Fit w={372}>https://blynk.cloud/external/api/update?token=RRHIA3GZ703ig6CQt6NgP4Bi9ejpF_Uz&V0=200</Fit></span><Mood close />
            </div>
          </div>
          <div className="flex h-[15.500px] items-center pl-[6px]">Headers<Socket /></div>
          <div className="flex h-[15.500px] items-center pl-[6px]">Data<Socket /></div>
          <div className="flex h-[14.500px] items-center pl-[6px]"><span className="w-[39px]">Success</span><Hole left="flex-1" /></div>
          <div className="h-[5px]" />
          <div className="flex h-[14.500px] items-center pl-[6px]"><span className="w-[39px]">Fail</span><Hole left="flex-1" /></div>
          <div className="h-[6px]" /><Notch c="off" />
        </div>
      </At>

      <At x={912} y={890}>
        <R c="off" tall extra="rounded-l-[4px]">
          <L>Label</L><F c="off" tip="text-[#e0503f]">Thermometer_Label</F><L>show</L>
          <span className="mr-[3px] ml-[6px] flex h-[16px] items-center gap-[3px] border border-[#45452f] px-[5px]"><L>ncir</L><F c="off" tip="text-[#3f7fc0]">ncir_1</F><L>read</L></span>
        </R>
      </At>

      {/* canvas controls */}
      <At x={1840} y={775}>
        <svg viewBox="0 0 36 200" className="h-[200px] w-9" fill="none" stroke="#5e5e5e" strokeWidth="1.800">
          <circle cx="18.500" cy="18" r="11" /><circle cx="18.500" cy="18" r="4" fill="#5e5e5e" /><path d="M18.500 2v8M18.500 26v8M2.500 18h8M26.500 18h8" />
          <circle cx="18.500" cy="61" r="15" /><path d="M18.500 53v16M10.500 61h16" />
          <circle cx="18.500" cy="95" r="15" /><path d="M10.500 95h16" />
        </svg>
      </At>
      <At x={1830} y={909}>
        <svg viewBox="0 0 42 60" className="h-[60px] w-[42px]" fill="#5a5a5a"><path d="m1 3 14-1 1-2h10l1 3 14 4v3L1 6zM3 17h36v39a3 3 0 0 1-3 3H6a3 3 0 0 1-3-3z" /></svg>
      </At>
      <At x={1897} y={370}><div className="h-[444px] w-[13px] rounded-[7px] bg-[#cdcdcd]" /></At>
      <At x={864} y={989}><div className="h-5 w-[708px] rounded-[8px] bg-[#cdcdcd]" /></At>

      <At x={1357} y={935}>
        <div className="flex h-[42px] text-[16px] [-webkit-text-stroke:0]">
          <div className="flex w-[151px] items-center rounded-full bg-[#ff7b3d] pl-[13px]">
            <svg viewBox="0 0 28 28" className="mr-[5px] h-7 w-7 shrink-0" fill="none" stroke="#fff" strokeWidth="2"><rect x="1" y="1" width="26" height="26" rx="3" /><path d="m6 7 6 5-6 5M13 20h8" /></svg>
            <Fit w={95} className="text-[15px]">Terminal (Beta)</Fit>
          </div>
          <div className="ml-[20px] flex w-[136px] items-center rounded-full bg-[#3d8dfb] pl-[32px]">
            <svg viewBox="0 0 21 24" className="mr-[10px] h-6 w-[21px]"><path d="M0 0v24l21-12z" fill="#fff" /></svg>Run
          </div>
          <div className="ml-[20px] flex w-[136px] items-center rounded-full bg-[#0564ee] pl-[15px]">
            <svg viewBox="0 0 30 28" className="mr-[6px] h-7 w-[30px]" fill="none" stroke="#fff" strokeWidth="2"><path d="M6 20a6 6 0 0 1-2-11C5 2 14 0 18 5M22 18V5l6 2v12M10 27h17v-8" /><path d="M13 8v10M8 14l5 5 5-5" strokeWidth="2.500" /><path d="M13 22h15v5H13z" /></svg>Download
          </div>
        </div>
      </At>

      <At x={1526} y={179}>
        <div className="flex h-[41px] w-[384px] items-center justify-center bg-[#68d5b9] [-webkit-text-stroke:0]"><Fit w={196} className="text-[18.600px]">Files saved successfully.</Fit></div>
      </At>
    </div>
  );
}

function StatusBar() {
  return (
    <div className="flex h-[21px] items-center bg-[#0066ef] text-[12px] text-white">
      <span className="ml-[26px] w-[47px] whitespace-nowrap">Api key :</span>
      <KeyRound className="h-4 w-4" strokeWidth={1.400} />
      <span className="ml-[5px]">5987E08A</span>
      <span className="ml-[16px] text-[14px]">[</span>
      <span className="mx-[4px] font-bold text-[#5ee614]">Connected</span>
      <span className="text-[14px]">]</span>
      <span className="ml-[6px] text-[14px]">version : V1.14.3</span>
      <RefreshCw className="ml-[8px] h-[14px] w-[14px]" strokeWidth={2.800} />
      <Save className="ml-[10px] h-[15px] w-[15px]" strokeWidth={1.600} />
      <FolderOpen className="ml-[8px] h-4 w-4" strokeWidth={1.600} />
      <Download className="ml-[9px] h-[15px] w-[15px]" strokeWidth={3} />
      <span className="ml-[425px]">Copyright ©2018-2025 M5Stack</span>
    </div>
  );
}

/* ---------- taskbar ---------- */
const tile = "flex h-6 w-6 items-center justify-center overflow-hidden text-white font-bold";
const apps: React.ReactNode[] = [
  <svg viewBox="0 0 24 24" className="h-6 w-6"><rect x="1" y="8" width="15" height="13" fill="#66605d" /><rect x="7" y="3" width="16" height="14" fill="#ececec" /></svg>,
  <svg viewBox="0 0 24 24" className="h-6 w-6"><path d="M9 2h6l3 7-4 2-5-9z" fill="#1c88e8" /><path d="M9 2C3 3 1 14 4 18h4l5-15z" fill="#27b6c9" /><path d="M4 18c2 5 8 4 10 2l4-9-5 0-4 8z" fill="#e8b530" /><path d="M15 9h6c3 0 1 10-4 13-3 1-6 0-7-3h3z" fill="#d65ad0" /></svg>,
  <svg viewBox="0 0 24 24" className="h-6 w-6"><path d="M1 3h8l2 3h12v15H1z" fill="#e7a91b" /><path d="M1 8h22v13H1z" fill="#ffd75e" /><path d="M6 15h12v6H6z" fill="#1f82d6" /></svg>,
  <svg viewBox="0 0 24 24" className="h-6 w-6"><circle cx="12" cy="12" r="11" fill="#1a7fd0" /><path d="M2 9C6-2 23 0 23 12c0 4-5 5-8 3 3-6-5-9-13-6z" fill="#4fd6a4" /><path d="M9 13c0 6 6 8 11 6-5 7-18 4-18-6 2-4 7-4 10-3-2 0-3 1-3 3z" fill="#0d4f9e" /></svg>,
  <svg viewBox="0 0 24 24" className="h-6 w-6"><rect width="24" height="24" fill="#063d10" /><path d="m3 3 18 18M20 2 4 22M12 2v20M4 12l16-2" stroke="#4fc04a" strokeWidth="2" /></svg>,
  <svg viewBox="0 0 24 24" className="h-6 w-6"><circle cx="12" cy="12" r="11" fill="#34a853" /><path d="M12 1a11 11 0 0 1 9.500 5.500H12L6.500 10 2.500 6.500A11 11 0 0 1 12 1z" fill="#ea4335" /><path d="M21.500 6.500A11 11 0 0 1 12 23l5-9-2-7.500z" fill="#fbbc04" /><circle cx="12" cy="12" r="5.500" fill="#fff" /><circle cx="12" cy="12" r="4.200" fill="#4285f4" /></svg>,
  <svg viewBox="0 0 24 24" className="h-6 w-6"><rect x="6" y="2" width="18" height="20" rx="1" fill="#41a5ee" /><rect x="6" y="12" width="18" height="10" fill="#185abd" /><rect y="6" width="13" height="12" fill="#103f91" /><text x="6.500" y="15.500" fontSize="10" fontWeight="700" fill="#fff" textAnchor="middle">W</text></svg>,
  <svg viewBox="0 0 24 24" className="h-6 w-6"><rect x="6" y="2" width="18" height="20" rx="1" fill="#33c481" /><rect x="6" y="12" width="18" height="10" fill="#107c41" /><rect y="6" width="13" height="12" fill="#185c37" /><text x="6.500" y="15.500" fontSize="10" fontWeight="700" fill="#fff" textAnchor="middle">X</text></svg>,
  <svg viewBox="0 0 24 24" className="h-6 w-6"><rect x="1" y="1" width="18" height="20" fill="#e9edf0" /><path d="M4 4h5v10H4zM12 4h4" stroke="#e2482d" strokeWidth="2.500" fill="none" /><path d="m12 10 9 11M22 13l-10 7" stroke="#2d82c9" strokeWidth="2" /><circle cx="21" cy="20" r="2.500" fill="none" stroke="#2d82c9" strokeWidth="1.600" /></svg>,
  <svg viewBox="0 0 24 24" className="h-6 w-6"><rect y="3" width="24" height="18" rx="1" fill="#4a4a4a" /><rect y="3" width="24" height="3" fill="#bbb" /><path d="m5 9 4 3.500L5 16M11 17h7" stroke="#fff" strokeWidth="1.800" fill="none" /></svg>,
  <div className={`${tile} flex-col rounded-[2px] bg-[#1a98ff] text-[7px] leading-[7px] !text-[#0c2846]`}><span>prime</span><span>video</span></div>,
  <svg viewBox="0 0 24 24" className="h-6 w-6"><path d="M2 1h12l5 5v17H2z" fill="#f2f2f2" /><path d="M10 9h5a3 3 0 0 1 3 3v3h-6a3 3 0 0 0-3 3H7v-5h6v-1H9c0-2 0-3 1-3z" fill="#3774a8" /><path d="M22 13v5a3 3 0 0 1-3 4h-6v-3h4v-3h2c2 0 2-3 3-3z" fill="#f7cb3f" /></svg>,
  <svg viewBox="0 0 24 24" className="h-6 w-6"><path d="M7 3h3l4 12V3h3v18h-3L10 9v12H7z" fill="#c20a14" /></svg>,
  <svg viewBox="0 0 24 24" className="h-6 w-6"><rect width="24" height="24" rx="2" fill="#e8303a" /><path d="M12 3v6M9 4l3 3 3-3" stroke="#fff" strokeWidth="1.500" fill="none" /><circle cx="12" cy="14" r="6.500" fill="#fff" /><path d="m8 10 8 8M16 10l-8 8" stroke="#e8303a" strokeWidth="1.500" /></svg>,
  <svg viewBox="0 0 24 24" className="h-6 w-6"><path d="m12 1 10 5.500v11L12 23 2 17.500v-11z" fill="#12356b" stroke="#d8e4f0" strokeWidth="1.500" /><path d="m3 7 9 5 9-5M12 12v10" stroke="#d8e4f0" strokeWidth="1.500" fill="none" /></svg>,
  <div className={`${tile} rounded-[3px] bg-[#2b3fc0] text-[14px]`}>Ki</div>,
  <svg viewBox="0 0 24 24" className="h-6 w-6"><circle cx="12" cy="12" r="11.500" fill="#17112b" /><circle cx="12" cy="11" r="6" stroke="#6c4be8" strokeWidth="3" fill="#f2f0ff" /><circle cx="12" cy="11" r="2.500" fill="#17112b" /></svg>,
  <svg viewBox="0 0 24 24" className="h-6 w-6"><rect width="24" height="24" rx="5" fill="#f6f6f6" /><circle cx="12" cy="12" r="7.500" fill="none" stroke="#1a1a1a" strokeWidth="4" strokeDasharray="3.500 1.200" /><circle cx="12" cy="12" r="5" fill="#fff" stroke="#f08c1a" strokeWidth="1.500" /><circle cx="12" cy="12" r="2.500" fill="#111" /></svg>,
  <svg viewBox="0 0 24 24" className="h-6 w-6"><path d="m1 9 19-7v4L1 13z" fill="#b05cf0" /><rect x="1" y="9" width="22" height="13" rx="1" fill="#8a3fe8" /><path d="M1 11h22v4H1z" fill="#c889ff" /></svg>,
  <div className={`${tile} rounded-full bg-[#0b5cff] text-[11px]`}>zm</div>,
  <svg viewBox="0 0 24 24" className="h-6 w-6"><path d="m2 2 9 8L22 1v4L8 22H2z" fill="#150808" stroke="#a3161c" strokeWidth="1.300" /><path d="M2 2v20L22 3M14 12l8 10" fill="none" stroke="#a3161c" /></svg>,
  <svg viewBox="0 0 24 24" className="h-6 w-6"><rect width="24" height="24" rx="2" fill="#1b78d6" /><path d="M6 19 11 5h3l4 14h-3l-2.500-9L10 19z" fill="#fff" /></svg>,
  <svg viewBox="0 0 24 24" className="h-6 w-6"><path d="M2 8 12 1l10 6-3 13-8 3L5 17z" fill="#2e6f97" /><path d="m4 8 12 13M8 5l11 12M12 3l8 9" stroke="#a9d4ea" strokeWidth="1.600" /></svg>,
  <div className={`${tile} rounded-full bg-white`}><M5 className="h-4 w-4" /></div>,
  <div className={`${tile} rounded-full bg-white`}><M5 className="h-4 w-4" /></div>,
  <svg viewBox="0 0 24 24" className="h-6 w-6"><rect x="1" y="1" width="22" height="22" rx="3" fill="#1e6fd0" /><path d="m1 20 10-10 12 12H3z" fill="#8fd3ff" /><circle cx="16" cy="6" r="2" fill="#fff" /></svg>,
];

function Taskbar() {
  return (
    <div className="flex h-[39px] items-center bg-gradient-to-r from-[#3a2117] via-[#4a1818] to-[#341412] pt-[7px] text-white">
      <div className="ml-[209px] grid h-[23px] w-[23px] grid-cols-2 gap-[1.500px]">
        <div className="bg-[#62c8f7]" /><div className="bg-[#4cbdf4]" /><div className="bg-[#3aaef0]" /><div className="bg-[#2aa2ec]" />
      </div>
      <div className="mr-[3px] ml-[14px] flex h-[30px] w-[217px] items-center rounded-full bg-[#f3f2f1] pl-[10px] text-[14px] text-[#5c5c5c]">
        <Search className="mr-[9px] h-[17px] w-[17px] -scale-x-100 text-[#333]" strokeWidth={2.200} /><Fit w={42}>Search</Fit>
      </div>
      {apps.map((icon, i) => (
        <div key={i} className="flex w-[44px] shrink-0 items-center justify-center">
          <div className={i === 5 ? "-my-[6px] flex h-9 w-[38px] items-center justify-center rounded-[4px] bg-white/10" : ""}>{icon}</div>
        </div>
      ))}
      <div className="mr-[9px] ml-auto flex items-center">
        <ChevronUp className="h-[15px] w-[15px]" />
        <Cloud className="ml-[16px] h-4 w-4 fill-[#e8e8e8]" />
        <Wifi className="ml-[16px] h-4 w-4" />
        <Volume2 className="ml-[7px] h-4 w-4" />
        <svg viewBox="0 0 18 16" className="ml-[8px] h-[15px] w-[17px]" fill="none" stroke="#fff" strokeWidth="1.500"><path d="M7 5h8v8H2V8M16 7.500v3" /><path d="M5 8h7v3H5z" fill="#fff" /><path d="M3 1v4M6 1v4M1.500 4h6" /></svg>
        <div className="ml-[16px] flex flex-col items-end text-[11.500px] leading-[16px]"><Fit w={50}>10:21 PM</Fit><Fit w={55}>4/21/2025</Fit></div>
        <svg viewBox="0 0 18 18" className="ml-[8px] h-4 w-[16px]"><path d="M9 1a5 5 0 0 0-5 5v4l-2 3h14l-2-3V6a5 5 0 0 0-5-5zM7 14h4a2 2 0 0 1-4 0z" fill="#fff" /><text x="9" y="10.500" fontSize="7" fontWeight="700" textAnchor="middle" fill="#341412">z</text></svg>
      </div>
    </div>
  );
}

export default function App() {
  return (
    <div className="relative flex h-[1072px] w-[1910px] flex-col overflow-hidden bg-[#1e1e1e]" style={{ fontFamily: "'Liberation Sans', Arial, sans-serif" }}>
      <div className="flex shrink-0 flex-col" style={{ fontFamily: "'Open Sans', sans-serif" }}>
        <TabStrip />
        <AddressBar />
        <Bookmarks />
      </div>
      <div className="shrink-0"><Header /></div>
      <div className="flex h-[843px] shrink-0">
        <Rail />
        <Preview />
        <Toolbox />
        <Workspace />
      </div>
      <StatusBar />
      <div className="shrink-0" style={{ fontFamily: "'Open Sans', sans-serif" }}><Taskbar /></div>
      <div className="absolute top-[965px] left-0 flex h-[37px] w-[94px] items-center rounded-r-[6px] bg-[#454f5a] pl-[16px] text-[18px] font-bold text-white">Hide UI</div>
    </div>
  );
}
